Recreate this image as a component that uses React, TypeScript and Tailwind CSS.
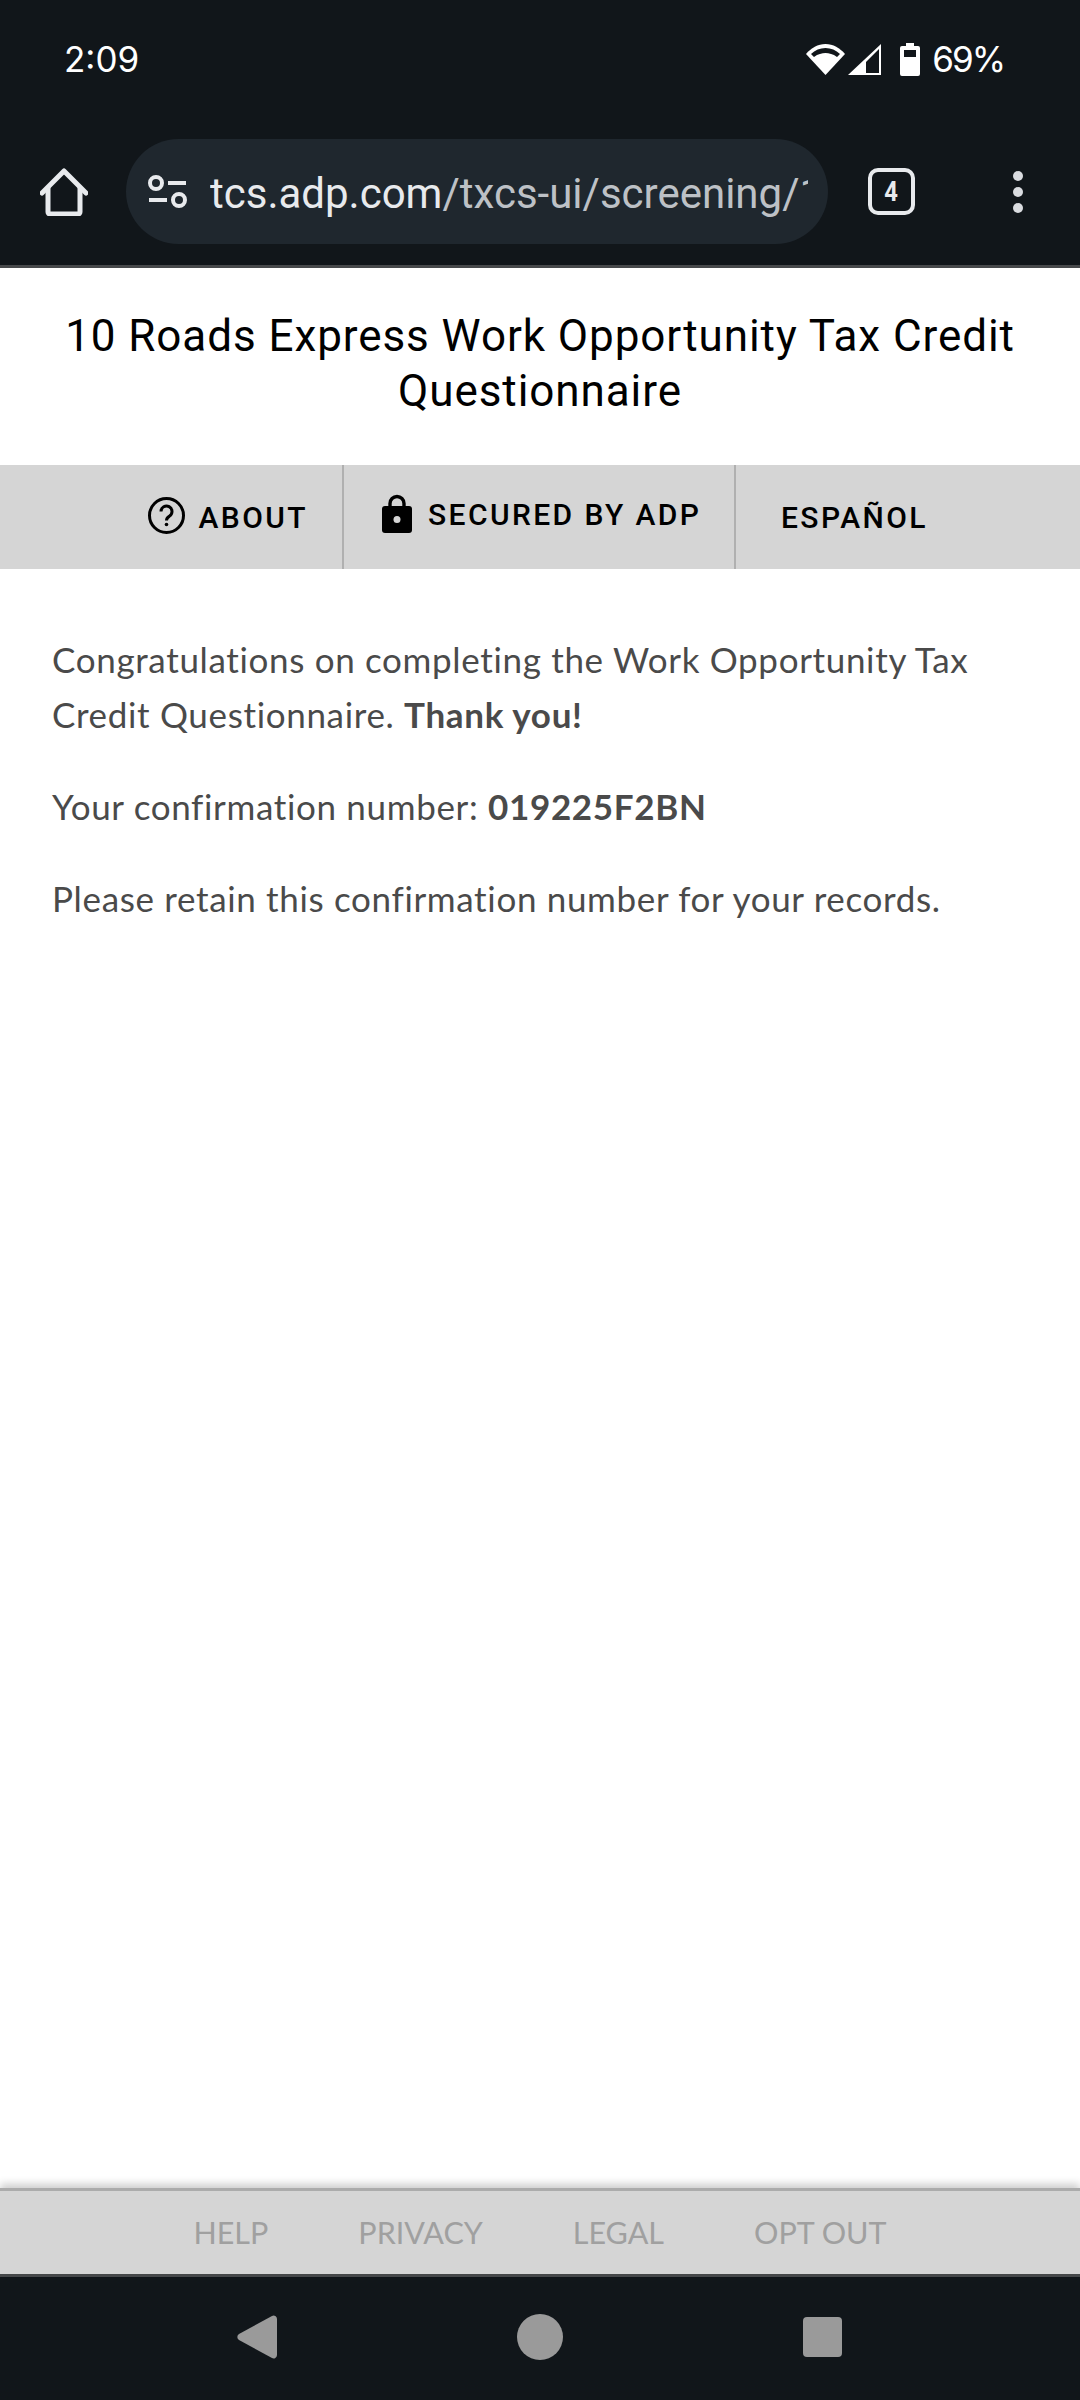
function StatusBar() {
  return (
    <div className="h-[114px] flex items-center justify-between pl-[64px] pr-[76px] pt-[4px] text-white text-[35px] font-['Inter',sans-serif]">
      <span>2:09</span>
      <div className="flex items-center">
        <svg width="39" height="31" viewBox="0 0 39 31" className="mr-[3px]">
          <path d="M19.5 31 0 10C5 4 12 0 19.5 0S34 4 39 10z" fill="#fff" />
          <path d="M5 10C9 6 14 4 19.5 4S30 6 34 10l-3 3C27 10 23 9 19.5 9S12 10 8 13z" fill="#11161a" />
        </svg>
        <svg width="33" height="31" viewBox="0 0 33 31" className="mr-[19px]">
          <path d="M33 0v31H0z" fill="#fff" />
          <path d="M31 5v24H18V18z" fill="#11161a" />
        </svg>
        <svg width="20" height="33" viewBox="0 0 20 33" className="mr-[12px]">
          <path d="M6 0h8v3h4a2 2 0 0 1 2 2v26a2 2 0 0 1-2 2H2a2 2 0 0 1-2-2V5a2 2 0 0 1 2-2h4z" fill="#fff" />
          <rect x="4" y="7" width="12" height="7" fill="#11161a" />
        </svg>
        <span className="tracking-[-2px]">69%</span>
      </div>
    </div>
  );
}

function Toolbar() {
  return (
    <div className="h-[154px] flex items-start border-b-[3px] border-[#47494b]">
      <svg width="48" height="48" viewBox="0 0 48 48" className="ml-[40px] mt-[54px]" fill="none" stroke="#e8eaed" strokeWidth="5" strokeLinejoin="round" strokeLinecap="round">
        <path d="M2 25 24 3l22 22" />
        <path d="M8 20v24a2 2 0 0 0 2 2h28a2 2 0 0 0 2-2V20" />
      </svg>
      <div className="ml-[38px] mt-[25px] w-[702px] h-[105px] rounded-full bg-[#1f272e] flex items-center pl-[22px] pr-[20px] overflow-hidden">
        <svg width="40" height="36" viewBox="0 0 40 36" className="shrink-0 mr-[22px]" fill="none" stroke="#e8eaed" strokeWidth="4">
          <circle cx="8" cy="9" r="6" />
          <path d="M20 9h18M1 26h18" />
          <circle cx="31" cy="26" r="6" />
        </svg>
        <span className="whitespace-nowrap overflow-hidden mt-[3px] text-[42px] text-[#e8eaed] font-['Roboto',sans-serif]">
          tcs.adp.com<span className="text-[#bdc1c6]">/txcs-ui/screening/1</span>
        </span>
      </div>
      <div className="ml-[40px] mt-[54px] w-[47px] h-[47px] rounded-[10px] border-[4px] border-[#e8eaed] flex items-center justify-center text-[#e8eaed] text-[28px] font-bold font-['Roboto',sans-serif]">
        <span className="scale-x-[0.85]">4</span>
      </div>
      <div className="ml-[98px] mt-[57px] flex flex-col gap-[6px]">
        <div className="w-[10px] h-[10px] rounded-full bg-[#dadce0]" />
        <div className="w-[10px] h-[10px] rounded-full bg-[#dadce0]" />
        <div className="w-[10px] h-[10px] rounded-full bg-[#dadce0]" />
      </div>
    </div>
  );
}

function SubNav() {
  return (
    <div className="h-[104px] bg-[#d5d5d5] flex text-black text-[30px] font-medium tracking-[2.4px] font-['Roboto',sans-serif]">
      <div className="w-[344px] flex items-center justify-end pr-[34px] border-r-2 border-[#b0b0b0]">
        <svg width="37" height="37" viewBox="0 0 37 37" fill="none" stroke="#000" strokeWidth="3" className="mr-[14px] mb-[4px]">
          <circle cx="18.5" cy="18.5" r="17" />
          <path d="M13 14.5a5.5 5.5 0 1 1 8.5 4.6c-1.800 1.100-3 2.200-3 4.400" />
          <circle cx="18.5" cy="27.500" r="1.800" fill="#000" stroke="none" />
        </svg>
        <span>ABOUT</span>
      </div>
      <div className="w-[392px] flex items-center pl-[38px] border-r-2 border-[#b0b0b0]">
        <svg width="30" height="39" viewBox="0 0 30 39" className="mr-[16px] mb-[8px]">
          <path d="M8 14V9.500a7 7 0 0 1 14 0V14" fill="none" stroke="#000" strokeWidth="3.400" />
          <path d="M3 12h24a3 3 0 0 1 3 3v21a3 3 0 0 1-3 3H3a3 3 0 0 1-3-3V15a3 3 0 0 1 3-3z" fill="#000" />
          <circle cx="15" cy="25.500" r="3.500" fill="#d5d5d5" />
        </svg>
        <span className="mb-[6px]">SECURED BY ADP</span>
      </div>
      <div className="flex items-center pl-[45px]">
        <span>ESPAÑOL</span>
      </div>
    </div>
  );
}

export default function App() {
  return (
    <div className="w-[1080px] h-[2400px] flex flex-col bg-white overflow-hidden">
      <div className="bg-[#11161a]">
        <StatusBar />
        <Toolbar />
      </div>
      <h1 className="h-[197px] pt-[41px] px-[50px] text-center text-black text-[44px] leading-[55px] tracking-[0.93px] font-normal font-['Roboto',sans-serif]">
        10 Roads Express Work Opportunity Tax Credit Questionnaire
      </h1>
      <SubNav />
      <main className="flex-1 pt-[63px] px-[52px] text-[#4a4a4a] text-[35px] leading-[55px] tracking-[0.66px] font-['Lato',sans-serif]">
        <p>
          Congratulations on completing the Work Opportunity Tax Credit Questionnaire. <b>Thank you!</b>
        </p>
        <p className="mt-[37px]">
          Your confirmation number: <b>019225F2BN</b>
        </p>
        <p className="mt-[37px]">Please retain this confirmation number for your records.</p>
      </main>
      <footer className="h-[86px] bg-[#d5d5d5] border-t-[3px] border-[#ababab] shadow-[0_-4px_8px_rgba(0,0,0,0.2)] flex items-center justify-center gap-[90px] text-[30.5px] text-[#a0a0a0] font-['Lato',sans-serif] relative">
        <span>HELP</span>
        <span>PRIVACY</span>
        <span>LEGAL</span>
        <span>OPT OUT</span>
      </footer>
      <div className="h-[126px] bg-[#11161a] border-t-[3px] border-[#47494b] flex items-center justify-between pl-[237px] pr-[238px] pb-[4px]">
        <svg width="40" height="44" viewBox="0 0 40 44">
          <path d="M35 1 2 19a3.500 3.500 0 0 0 0 6l33 18a3.400 3.400 0 0 0 5-3V4a3.400 3.400 0 0 0-5-3z" fill="#9a9a9a" />
        </svg>
        <div className="w-[46px] h-[46px] rounded-full bg-[#9a9a9a]" />
        <div className="w-[39px] h-[40px] rounded-[4px] bg-[#9a9a9a]" />
      </div>
    </div>
  );
}
